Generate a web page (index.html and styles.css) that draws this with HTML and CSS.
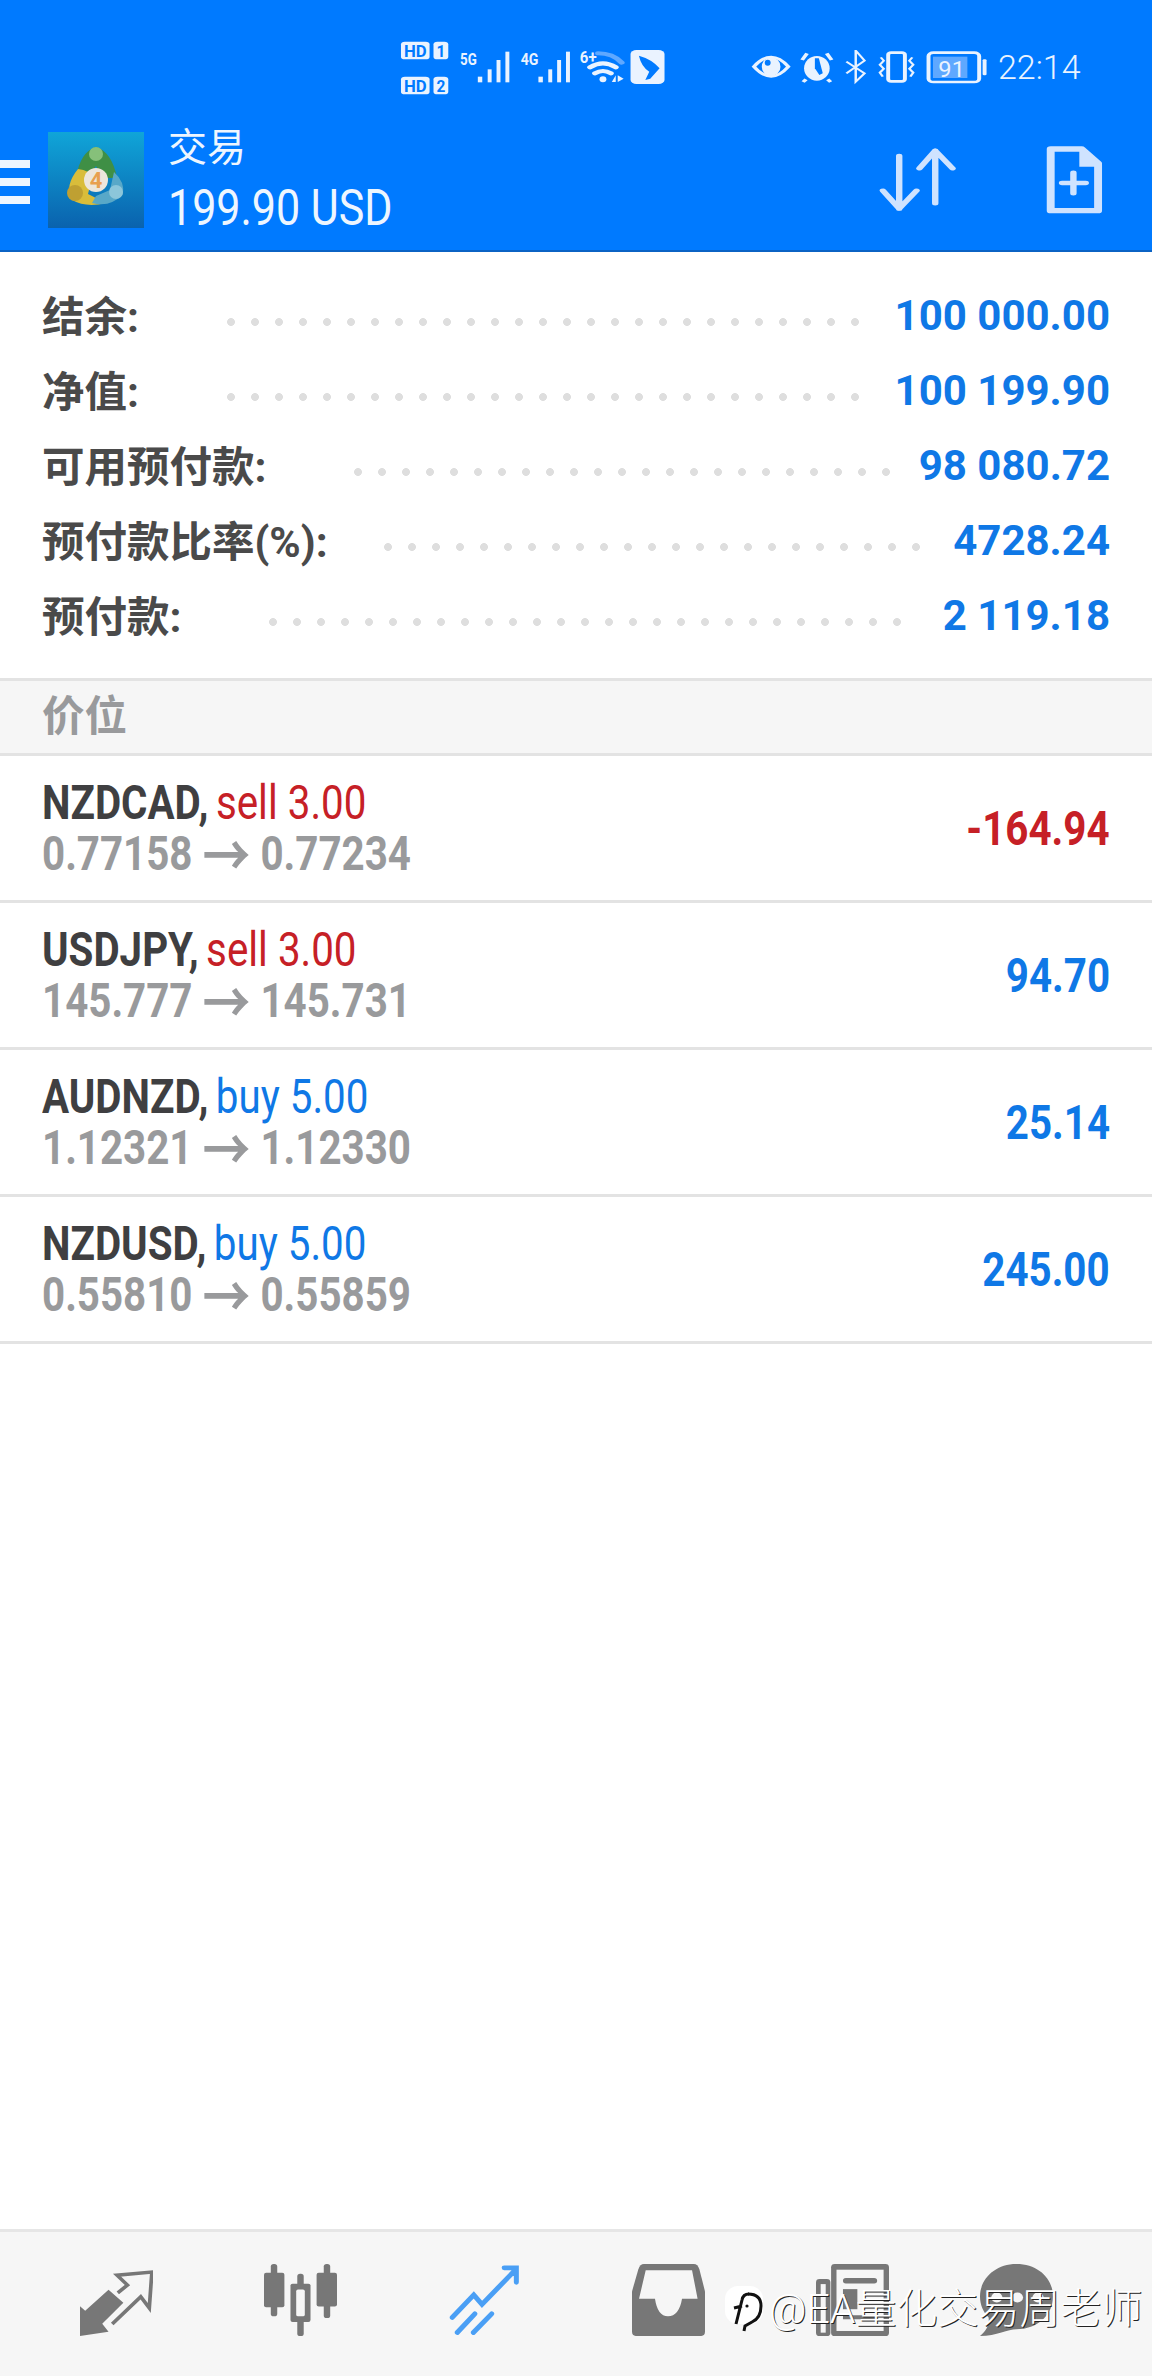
FILE: index.html
```html
<!DOCTYPE html>
<html>
<head>
    <meta charset="utf-8">
    <title>交易</title>
    <link rel="stylesheet" href="styles.css">
</head>
<body>

<div class="status">
    <svg class="status-left" viewBox="40 60 540 165" preserveAspectRatio="none">
        <rect class="s" x="42" y="65" width="58" height="53" rx="8"/>
        <text class="b" x="48" y="110" font-size="52" textLength="46" lengthAdjust="spacingAndGlyphs">HD</text>
        <rect class="s" x="108" y="65" width="30" height="53" rx="8"/>
        <text class="b" x="114" y="110" font-size="52" textLength="18" lengthAdjust="spacingAndGlyphs">1</text>
        <rect class="s" x="42" y="170" width="58" height="53" rx="8"/>
        <text class="b" x="48" y="215" font-size="52" textLength="46" lengthAdjust="spacingAndGlyphs">HD</text>
        <rect class="s" x="108" y="170" width="30" height="53" rx="8"/>
        <text class="b" x="114" y="215" font-size="52" textLength="18" lengthAdjust="spacingAndGlyphs">2</text>

        <text class="w" x="162" y="135" font-size="50" textLength="34" lengthAdjust="spacingAndGlyphs">5G</text>
        <rect class="s" x="198" y="170" width="9" height="17"/>
        <rect class="s" x="218" y="148" width="8" height="39"/>
        <rect class="s" x="236" y="120" width="8" height="67"/>
        <rect class="s" x="254" y="95" width="8" height="92"/>

        <text class="w" x="285" y="135" font-size="50" textLength="36" lengthAdjust="spacingAndGlyphs">4G</text>
        <rect class="s" x="321" y="170" width="9" height="17"/>
        <rect class="s" x="341" y="148" width="8" height="39"/>
        <rect class="s" x="359" y="120" width="8" height="67"/>
        <rect class="s" x="377" y="95" width="8" height="92"/>

        <text class="w" x="405" y="128" font-size="50" textLength="34" lengthAdjust="spacingAndGlyphs">6+</text>
        <path class="arc" d="M442 100 Q472 100 490 128" stroke="#5fa8ff"/>
        <path class="arc" d="M426 142 Q452 118 478 142" stroke="#eaf3ff"/>
        <path class="arc" d="M436 160 Q452 146 468 160" stroke="#eaf3ff"/>
        <ellipse class="s" cx="452" cy="178" rx="7" ry="9"/>
        <path class="s" d="M470 186 L478 166 V186 Z M482 166 L494 176 L482 186 Z"/>

        <rect class="s" x="508" y="90" width="69" height="102" rx="12"/>
        <path class="b" d="M525 107 Q552 118 567 145 L548 176 L538 180 L546 155 Q530 140 525 107 Z"/>
    </svg>
    <svg class="status-right" viewBox="750 90 490 105" preserveAspectRatio="none">
        <path class="line" d="M760 140 Q795 82 830 140 Q795 198 760 140 Z"/>
        <ellipse class="s" cx="795" cy="140" rx="19" ry="28"/>
        <ellipse class="b" cx="788" cy="128" rx="6" ry="9"/>

        <ellipse class="s" cx="888" cy="145" rx="26" ry="37"/>
        <path class="b" d="M884 115 L892 115 L900 160 L893 165 L884 145 Z"/>
        <path class="line" d="M858 120 L868 100 M918 120 L908 100 M866 178 L860 186 M910 178 L916 186"/>

        <path class="line thin" d="M948 125 L985 160 L967 185 V92 L985 122 L948 160"/>

        <rect class="line" x="1033" y="98" width="34" height="86" rx="6"/>
        <path class="line thin" d="M1018 112 L1024 122 L1016 134 L1024 146 L1016 158 L1022 170 M1082 112 L1076 122 L1084 134 L1076 146 L1084 158 L1078 170"/>

        <rect class="line" x="1115" y="98" width="103" height="88" rx="10"/>
        <rect x="1124" y="110" width="70" height="64" fill="#5fa8ff"/>
        <text class="w thin-num" x="1135" y="172" font-size="66" textLength="54" lengthAdjust="spacingAndGlyphs">91</text>
        <rect class="s" x="1225" y="118" width="8" height="48" rx="3"/>
    </svg>
    <span class="clock">22:14</span>
</div>

<div class="header">
    <div class="burger"><i></i><i></i><i></i></div>
    <svg class="logo" viewBox="0 0 96 96">
        <defs>
            <linearGradient id="tile" x1="0" y1="0" x2="0" y2="1">
                <stop offset="0" stop-color="#10a5d8"/>
                <stop offset="1" stop-color="#0a62ae"/>
            </linearGradient>
        </defs>
        <rect width="96" height="96" fill="url(#tile)"/>
        <path d="M48 15 Q64 20 69 46 L54 46 L48 34 L40 46 L28 46 Q32 20 48 15 Z" fill="#3f8f45"/>
        <circle cx="48" cy="22" r="7" fill="#86c07a"/>
        <path d="M30 37 Q42 38 44 46 L40 62 L58 71 Q38 76 24 68 Q16 54 30 37 Z" fill="#d9bd3a"/>
        <circle cx="27" cy="61" r="8" fill="#bfa032"/>
        <path d="M66 40 Q77 50 75 62 Q62 76 44 71 L48 64 L62 58 Z" fill="#58a8c8"/>
        <circle cx="68" cy="60" r="7" fill="#8cc6da"/>
        <circle cx="48" cy="48" r="12" fill="#ece6dc"/>
        <text x="48" y="56" class="logo-num">4</text>
    </svg>
    <div class="title">
        <div class="title-top">交易</div>
        <div class="title-sum"><span>199.90 USD</span></div>
    </div>
    <svg class="tools" viewBox="1010 375 460 210" preserveAspectRatio="none">
        <path class="tool-line" d="M1055 408 V566 M1022 512 L1055 566 L1090 512 M1128 392 V550 M1096 445 L1128 392 L1163 445"/>
        <path class="tool-file" d="M1362 387 H1425 L1458 430 V572 H1362 Z"/>
        <path class="tool-corner" d="M1420 387 H1430 L1462 430 V440 H1420 Z"/>
        <path class="tool-line" d="M1408 458 V520 M1385 489 H1433"/>
    </svg>
</div>

<div class="summary">
    <div class="sum-row"><span class="sum-label">结余:</span><span class="dots dots-long"></span><span class="sum-value">100 000.00</span></div>
    <div class="sum-row"><span class="sum-label">净值:</span><span class="dots dots-long"></span><span class="sum-value">100 199.90</span></div>
    <div class="sum-row"><span class="sum-label">可用预付款:</span><span class="dots dots-short"></span><span class="sum-value">98 080.72</span></div>
    <div class="sum-row"><span class="sum-label">预付款比率(%):</span><span class="dots dots-short dots-near"></span><span class="sum-value">4728.24</span></div>
    <div class="sum-row"><span class="sum-label">预付款:</span><span class="dots dots-long"></span><span class="sum-value">2 119.18</span></div>
</div>

<div class="section">价位</div>

<div class="position">
    <div class="pos-text">
        <div class="pos-top"><b>NZDCAD,</b> <span class="sell">sell 3.00</span></div>
        <div class="pos-price">0.77158 <span class="arrow">→</span> 0.77234</div>
    </div>
    <div class="pos-profit sell">-164.94</div>
</div>
<div class="position">
    <div class="pos-text">
        <div class="pos-top"><b>USDJPY,</b> <span class="sell">sell 3.00</span></div>
        <div class="pos-price">145.777 <span class="arrow">→</span> 145.731</div>
    </div>
    <div class="pos-profit buy">94.70</div>
</div>
<div class="position">
    <div class="pos-text">
        <div class="pos-top"><b>AUDNZD,</b> <span class="buy">buy 5.00</span></div>
        <div class="pos-price">1.12321 <span class="arrow">→</span> 1.12330</div>
    </div>
    <div class="pos-profit buy">25.14</div>
</div>
<div class="position">
    <div class="pos-text">
        <div class="pos-top"><b>NZDUSD,</b> <span class="buy">buy 5.00</span></div>
        <div class="pos-price">0.55810 <span class="arrow">→</span> 0.55859</div>
    </div>
    <div class="pos-profit buy">245.00</div>
</div>

<div class="spacer"></div>

<div class="tabbar">
    <svg class="tab" viewBox="218 165 197 205" preserveAspectRatio="none">
        <path class="tab-fill" d="M218 285 L232 298 L295 238 L335 275 L278 335 L295 358 L218 370 Z"/>
        <path class="tab-line" d="M305 336 L382 258 L405 290 L412 188 L318 197 L346 225 L320 247"/>
    </svg>
    <svg class="tab tab-candles" viewBox="713 165 204 220" preserveAspectRatio="none">
        <rect class="tab-fill" x="732" y="165" width="18" height="160" rx="8"/>
        <rect class="tab-fill" x="713" y="192" width="57" height="105" rx="6"/>
        <rect class="tab-fill" x="880" y="165" width="18" height="165" rx="8"/>
        <rect class="tab-fill" x="860" y="192" width="57" height="103" rx="6"/>
        <rect class="tab-fill" x="806" y="195" width="18" height="190" rx="8"/>
        <rect class="tab-fill" x="787" y="225" width="56" height="117" rx="6"/>
        <rect class="tab-hole" x="803" y="243" width="24" height="82" rx="5"/>
    </svg>
    <svg class="tab" viewBox="1215 170 204 205" preserveAspectRatio="none">
        <path class="tab-on" d="M1227 322 L1287 258 L1310 285 L1405 185 M1372 181 H1406 V222 M1241 365 L1290 312 M1286 365 L1337 312"/>
    </svg>
    <svg class="tab" viewBox="153 175 197 197" preserveAspectRatio="none">
        <path class="tab-fill" d="M185 175 H320 Q330 175 335 190 L350 250 V360 Q350 372 340 372 H163 Q153 372 153 360 V250 L170 190 Q175 175 185 175 Z"/>
        <path class="tab-hole" d="M190 192 H315 L330 270 H288 Q280 318 250 318 Q222 318 215 270 H172 Z"/>
    </svg>
    <svg class="tab" viewBox="655 165 203 215" preserveAspectRatio="none">
        <rect class="tab-fill" x="655" y="210" width="40" height="170" rx="10"/>
        <rect class="tab-fill" x="697" y="165" width="161" height="215" rx="10"/>
        <rect class="tab-hole" x="668" y="225" width="14" height="145"/>
        <rect class="tab-hole" x="712" y="182" width="131" height="183"/>
        <rect class="tab-fill" x="730" y="207" width="95" height="16" rx="8"/>
        <rect class="tab-fill" x="730" y="240" width="40" height="60"/>
        <rect class="tab-fill" x="730" y="318" width="95" height="12"/>
    </svg>
    <svg class="tab tab-last" viewBox="1105 165 195 215" preserveAspectRatio="none">
        <path class="tab-fill" d="M1202 165 C1262 165 1300 210 1300 262 C1300 318 1258 360 1202 360 C1180 360 1150 380 1105 380 C1125 360 1130 345 1128 325 C1115 310 1105 288 1105 262 C1105 210 1145 165 1202 165 Z"/>
        <circle class="tab-hole" cx="1150" cy="265" r="15"/>
        <circle class="tab-hole" cx="1205" cy="265" r="15"/>
        <circle class="tab-hole" cx="1260" cy="265" r="15"/>
    </svg>
</div>

<div class="mark">
    <svg class="mark-logo" viewBox="0 0 38 46">
        <rect width="38" height="38" rx="13" fill="#fff"/>
        <path d="M9 22 L17 20 M24 8 Q18 8 17 14 L11 38" fill="none" stroke="#111" stroke-width="3"/>
        <path d="M23 8 Q36 8 36 20 Q36 32 27 36 L20 40 L19 45" fill="none" stroke="#111" stroke-width="3"/>
        <circle cx="22" cy="20" r="1.6" fill="#111"/>
    </svg>
    <span>@EA量化交易周老师</span>
</div>

</body>
</html>
```

FILE: styles.css
```css
html, body {
    margin: 0;
    padding: 0;
}

body {
    position: relative;
    width: 1152px;
    height: 2376px;
    display: flex;
    flex-direction: column;
    background: #fff;
    font-family: Roboto, "Noto Sans CJK SC", sans-serif;
    overflow: hidden;
}

/* status bar */

.status {
    height: 120px;
    box-sizing: border-box;
    background: #007aff;
    display: flex;
    align-items: flex-start;
    padding: 40px 0 0 400px;
    color: #eaf3ff;
}

.status-left {
    width: 266px;
    height: 55px;
}

.status-right {
    width: 241px;
    height: 35px;
    margin: 10px 0 0 83px;
}

.clock {
    font-size: 34px;
    line-height: 40px;
    margin: 7px 0 0 8px;
    font-weight: 300;
}

.s { fill: #eaf3ff; }
.b { fill: #007aff; font-family: Roboto, sans-serif; font-weight: 700; }
.w { fill: #eaf3ff; font-family: Roboto, sans-serif; font-weight: 700; }
.thin-num { font-weight: 400; }
.line { fill: none; stroke: #eaf3ff; stroke-width: 8; }
.thin { stroke-width: 5; }
.arc { fill: none; stroke-width: 12; stroke-linecap: round; }

/* header */

.header {
    height: 132px;
    box-sizing: border-box;
    background: #007aff;
    border-bottom: 2px solid #0b63c4;
    display: flex;
    align-items: flex-start;
    padding-top: 12px;
    color: #eef6ff;
}

.burger {
    width: 30px;
    margin: 28px 18px 0 0;
}

.burger i {
    display: block;
    height: 8px;
    margin-bottom: 10px;
    background: #eef6ff;
}

.logo {
    width: 96px;
    height: 96px;
}

.logo-num {
    font-size: 22px;
    font-weight: 700;
    fill: #e8a050;
    text-anchor: middle;
}

.title {
    margin-left: 24px;
    flex: 1;
}

.title-top {
    font-size: 39px;
    line-height: 40px;
    margin-top: -4px;
}

.title-sum {
    font-size: 50px;
    line-height: 56px;
    margin-top: 12px;
    white-space: nowrap;
}

.title-sum span {
    display: inline-block;
    transform: scaleX(.86);
    transform-origin: left;
}

.tools {
    width: 227px;
    height: 70px;
    margin: 13px 48px 0 0;
}

.tool-line {
    fill: none;
    stroke: #cfe3ff;
    stroke-width: 13;
    stroke-linecap: round;
    stroke-linejoin: round;
}

.tool-file {
    fill: none;
    stroke: #cfe3ff;
    stroke-width: 16;
    stroke-linejoin: round;
}

.tool-corner {
    fill: #cfe3ff;
}

/* account summary */

.summary {
    padding: 26px 42px 25px 42px;
    border-bottom: 3px solid #e3e3e3;
}

.sum-row {
    display: flex;
    align-items: center;
    height: 75px;
}

.sum-label {
    font-size: 42.5px;
    font-weight: 700;
    color: #4a4a4a;
    margin-top: -4px;
}

.dots {
    height: 8px;
    margin: 12px 0 0 88px;
    background: radial-gradient(circle at 4px 4px, #dedede 3.6px, transparent 4.2px) 0 0 / 24px 8px repeat-x;
}

.dots-long { width: 648px; }
.dots-short { width: 552px; }
.dots-near { margin-left: 56px; }

.sum-value {
    margin-left: auto;
    font-size: 42px;
    font-weight: 700;
    color: #0f78e6;
}

.section {
    height: 72px;
    line-height: 71px;
    padding-left: 42px;
    font-size: 42.5px;
    font-weight: 700;
    color: #999a9c;
    background: #f6f6f6;
    border-bottom: 3px solid #e3e3e3;
}

/* positions */

.position {
    height: 144px;
    display: flex;
    align-items: center;
    justify-content: space-between;
    padding: 0 42px;
    border-bottom: 3px solid #e3e3e3;
    white-space: nowrap;
}

.pos-top,
.pos-price {
    line-height: 51px;
    font-size: 48px;
    transform-origin: left;
}

.pos-top {
    transform: scaleX(.84);
}

.pos-top b {
    color: #3f3f41;
    margin-right: -3px;
}

.pos-price {
    font-weight: 700;
    color: #999a9c;
    transform: scaleX(.84);
}

.arrow {
    font-family: "Noto Sans CJK SC", sans-serif;
    font-size: 57px;
    line-height: 0;
    vertical-align: -6px;
}

.pos-profit {
    font-size: 48px;
    font-weight: 700;
    transform: scaleX(.84);
    transform-origin: right;
}

.sell { color: #c62026; }
.buy { color: #0f78e6; }

.spacer {
    flex: 1;
}

/* tab bar */

.tabbar {
    height: 147px;
    box-sizing: border-box;
    background: #f6f6f6;
    border-top: 3px solid #e6e6e6;
    display: flex;
    align-items: center;
    gap: 111px;
    padding: 0 0 8px 80px;
}

.tab {
    width: 73px;
    height: 72px;
}

.tab-last {
    margin-left: -20px;
}

.tab-fill { fill: #777; }
.tab-hole { fill: #f6f6f6; }
.tab-line { fill: none; stroke: #777; stroke-width: 10; }
.tab-on {
    fill: none;
    stroke: #4a9ff5;
    stroke-width: 14;
    stroke-linecap: round;
}

/* watermark */

.mark {
    position: absolute;
    left: 725px;
    top: 2286px;
    display: flex;
    align-items: center;
    gap: 6px;
    font-size: 41px;
    line-height: 46px;
    font-weight: 300;
    color: #fff;
    text-shadow: 1px 1px 0 #222;
    white-space: nowrap;
}

.mark-logo {
    width: 38px;
    height: 46px;
}
```
